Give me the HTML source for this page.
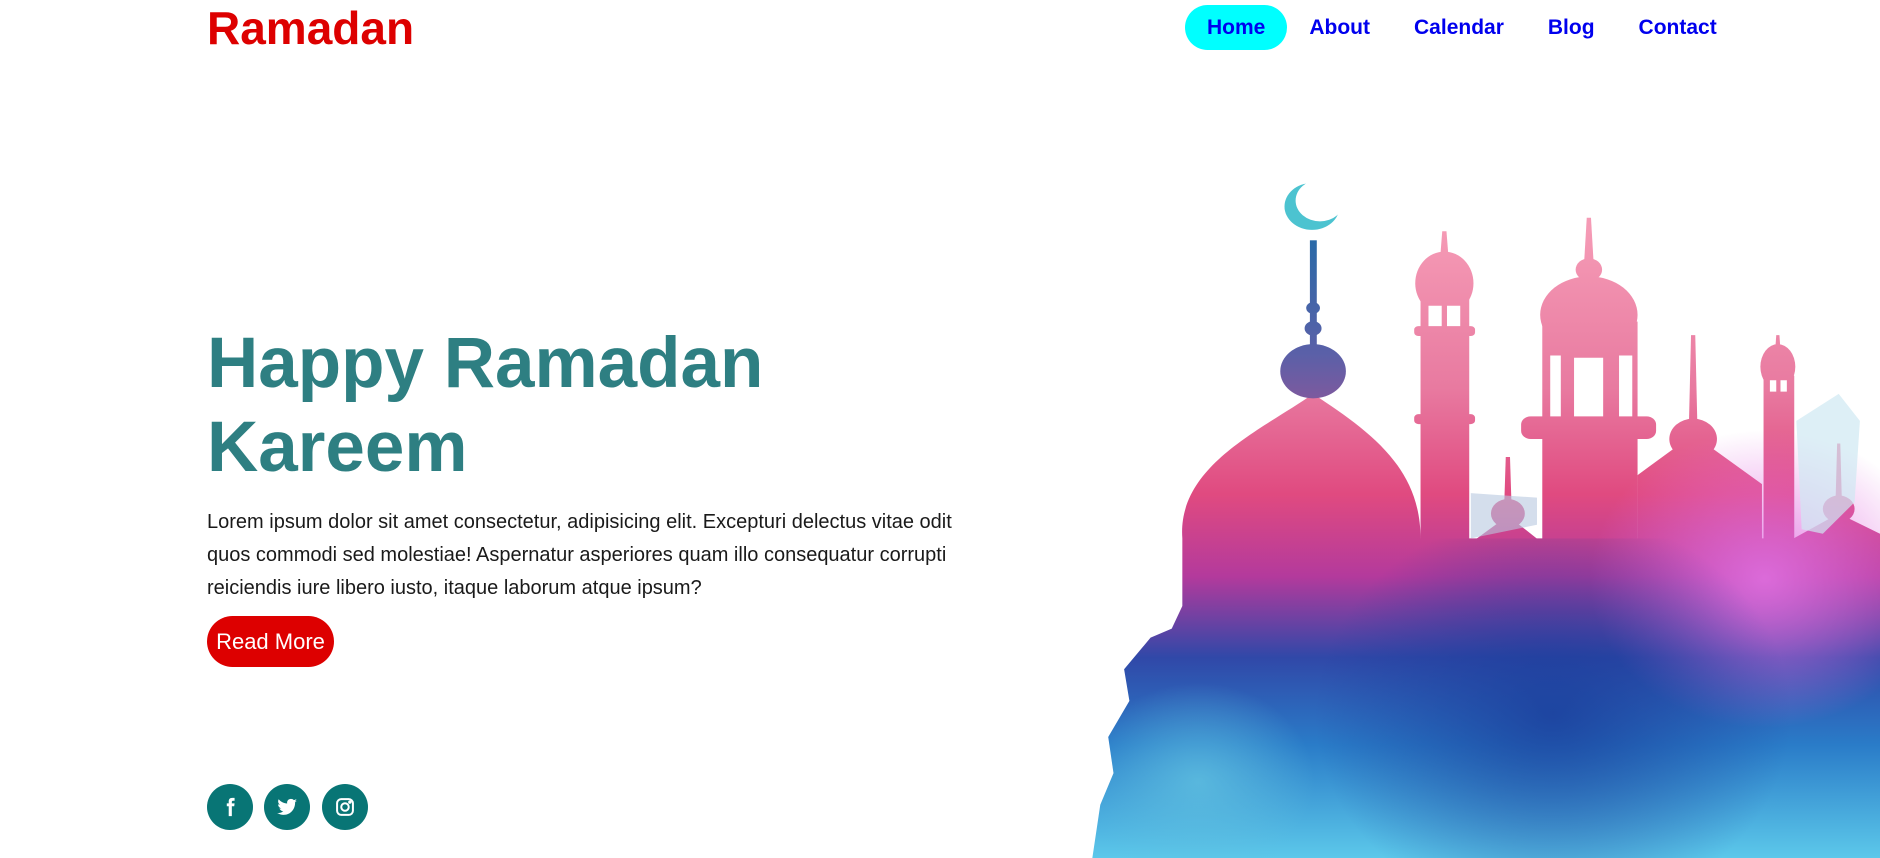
<!DOCTYPE html>
<html><head><meta charset="utf-8"><style>
*{margin:0;padding:0;box-sizing:border-box}
body{width:1880px;height:858px;overflow:hidden;background:#fff;font-family:"Liberation Sans",Arial,sans-serif;position:relative}
.logo{position:absolute;left:207px;top:1px;font-size:46px;font-weight:bold;color:#dd0000;line-height:54px}
.nav{position:absolute;top:5px;left:1185px;display:flex;align-items:center;height:45px}
.nav a{font-size:21px;font-weight:bold;color:#0000ee;text-decoration:none;padding:0 22px;height:45px;line-height:45px;border-radius:23px}
.nav a.act{background:#00ffff}
h1{position:absolute;left:207px;top:322px;font-size:71px;line-height:84px;color:#2e7f82;font-weight:bold}
p{position:absolute;left:207px;top:506px;width:790px;font-size:20px;line-height:33px;color:#1a1a1a}
.btn{position:absolute;left:207px;top:616px;width:127px;height:51px;border-radius:26px;background:#dd0000;color:#fff;font-size:22px;line-height:51px;text-align:center}
.soc{position:absolute;top:784px;width:46px;height:46px;border-radius:50%;background:#087575;display:flex;align-items:center;justify-content:center}
svg.m{position:absolute;left:1050px;top:150px}
</style></head><body>
<div class="logo">Ramadan</div>
<div class="nav"><a class="act">Home</a><a>About</a><a>Calendar</a><a>Blog</a><a>Contact</a></div>
<h1>Happy Ramadan<br>Kareem</h1>
<p>Lorem ipsum dolor sit amet consectetur, adipisicing elit. Excepturi delectus vitae odit quos commodi sed molestiae! Aspernatur asperiores quam illo consequatur corrupti reiciendis iure libero iusto, itaque laborum atque ipsum?</p>
<div class="btn">Read More</div>
<div class="soc" style="left:207px"><svg width="22" height="22" viewBox="0 0 24 24"><path d="M14 8V6.5c0-.8.3-1.3 1.4-1.3H17V2h-2.6C11.6 2 10.6 3.6 10.6 6.2V8H8.5v3.2h2.1V22H14V11.2h2.6l.4-3.2z" fill="#fff"/></svg></div>
<div class="soc" style="left:264px"><svg width="24" height="24" viewBox="0 0 24 24"><path d="M22 5.8c-.7.3-1.5.5-2.4.6.9-.5 1.5-1.3 1.8-2.3-.8.5-1.7.8-2.6 1-1.6-1.7-4.4-1.6-5.9.2-.7.9-1 2.1-.7 3.2C8.8 8.3 5.7 6.7 3.7 4.2c-1.1 1.9-.5 4.3 1.3 5.5-.7 0-1.3-.2-1.9-.5 0 2 1.4 3.7 3.3 4.1-.6.2-1.2.2-1.9.1.5 1.700 2.100 2.800 3.800 2.900-1.700 1.400-3.900 2-6.100 1.700 1.900 1.200 4.100 1.900 6.300 1.900 7.600 0 11.800-6.300 11.600-12.600.8-.6 1.500-1.300 2-2.100z" fill="#fff"/></svg></div>
<div class="soc" style="left:322px"><svg width="20" height="20" viewBox="0 0 24 24" fill="none" stroke="#fff" stroke-width="2.4"><rect x="2.5" y="2.5" width="19" height="19" rx="5"/><circle cx="12" cy="12" r="4.5"/><circle cx="17.8" cy="6.2" r=".8" fill="#fff"/></svg></div>

<svg class="m" width="830" height="708" viewBox="0 0 1568 1568" preserveAspectRatio="none">
<defs>
<linearGradient id="g" gradientUnits="userSpaceOnUse" x1="0" y1="180" x2="0" y2="1568">
<stop offset="0" stop-color="#f59ab5"/><stop offset=".25" stop-color="#e87aa0"/><stop offset=".42" stop-color="#e04a80"/><stop offset=".55" stop-color="#b43a9c"/><stop offset=".68" stop-color="#3048a8"/><stop offset=".82" stop-color="#2a7cc8"/><stop offset="1" stop-color="#5cc8ea"/></linearGradient>
<linearGradient id="t" gradientUnits="userSpaceOnUse" x1="0" y1="200" x2="0" y2="700"><stop offset="0" stop-color="#2a6aa8"/><stop offset=".5" stop-color="#5a60a8"/><stop offset="1" stop-color="#b05090"/></linearGradient>
<radialGradient id="p" cx="1350" cy="950" r="330" gradientUnits="userSpaceOnUse"><stop offset="0" stop-color="#e070e0" stop-opacity=".9"/><stop offset="1" stop-color="#e070e0" stop-opacity="0"/></radialGradient>
<radialGradient id="b" cx="950" cy="1250" r="450" gradientUnits="userSpaceOnUse"><stop offset="0" stop-color="#1a3c9a" stop-opacity=".8"/><stop offset="1" stop-color="#1a3c9a" stop-opacity="0"/></radialGradient>
<radialGradient id="c" cx="280" cy="1400" r="220" gradientUnits="userSpaceOnUse"><stop offset="0" stop-color="#60c0e0" stop-opacity=".8"/><stop offset="1" stop-color="#60c0e0" stop-opacity="0"/></radialGradient>
<mask id="cm"><rect width="1568" height="1568" fill="#fff"/><circle cx="510" cy="112" r="46" fill="#000"/></mask>
<clipPath id="cl"><path d="M80 1568 L95 1450 L120 1380 L110 1300 L150 1220 L140 1150 L190 1080 L230 1060 L250 1010 L250 860 L1568 860 L1568 1568Z"/></clipPath>
</defs>
<circle cx="495" cy="125" r="52" fill="#4cc3d0" mask="url(#cm)"/>
<g fill="url(#g)">
<path d="M80 1568 L95 1450 L120 1380 L110 1300 L150 1220 L140 1150 L190 1080 L230 1060 L250 1010 L250 860 C240 700 400 620 497 540 C600 620 700 700 700 860 L1568 860 L1568 1568Z"/>
<rect x="700" y="330" width="92" height="560"/><ellipse cx="745" cy="295" rx="55" ry="70"/><rect x="688" y="390" width="115" height="22" rx="8"/><rect x="688" y="585" width="115" height="22" rx="8"/><path d="M741 180h8l4 60h-16z"/>
<rect x="930" y="380" width="180" height="620"/><ellipse cx="1018" cy="365" rx="92" ry="85"/><rect x="890" y="590" width="255" height="50" rx="18"/><path d="M1014 150h8l6 120h-20z"/><circle cx="1018" cy="265" r="25"/>
<circle cx="865" cy="805" r="32"/><path d="M795 870 L865 810 L930 870Z"/><path d="M861 680h8l3 110h-14z"/>
<path d="M1110 720 L1215 630 L1345 740 L1345 1000 L1110 1000Z"/><circle cx="1215" cy="640" r="45"/><path d="M1211 410h8l4 200h-16z"/>
<rect x="1348" y="500" width="58" height="400"/><ellipse cx="1375" cy="480" rx="33" ry="50"/><path d="M1372 410h6l3 50h-12z"/>
<circle cx="1490" cy="795" r="30"/><path d="M1405 860 L1490 805 L1568 850 L1568 1000 L1405 1000Z"/><path d="M1487 650h6l3 130h-12z"/>
</g>
<g fill="url(#t)">
<ellipse cx="497" cy="490" rx="62" ry="60"/>
<rect x="491" y="200" width="13" height="260"/><circle cx="497" cy="350" r="13"/><circle cx="497" cy="395" r="16"/>
</g>
<g fill="#fff"><path d="M715 345h25v45h-25z M750 345h25v45h-25z M945 455h20v135h-20z M990 460h55v130h-55z M1075 455h25v135h-25z M1360 510h12v25h-12z M1380 510h12v25h-12z"/></g>
<ellipse cx="1350" cy="950" rx="330" ry="330" fill="url(#p)"/>
<ellipse cx="950" cy="1250" rx="450" ry="450" fill="url(#b)" clip-path="url(#cl)"/>
<ellipse cx="280" cy="1400" rx="220" ry="220" fill="url(#c)" clip-path="url(#cl)"/>
<path d="M1410 600 L1490 540 L1530 600 L1520 780 L1460 850 L1420 840Z" fill="#cfe8f2" opacity=".7"/>
<path d="M795 760 L920 770 L920 830 L795 860Z" fill="#b8c8e0" opacity=".6"/>
</svg>
</body></html>
